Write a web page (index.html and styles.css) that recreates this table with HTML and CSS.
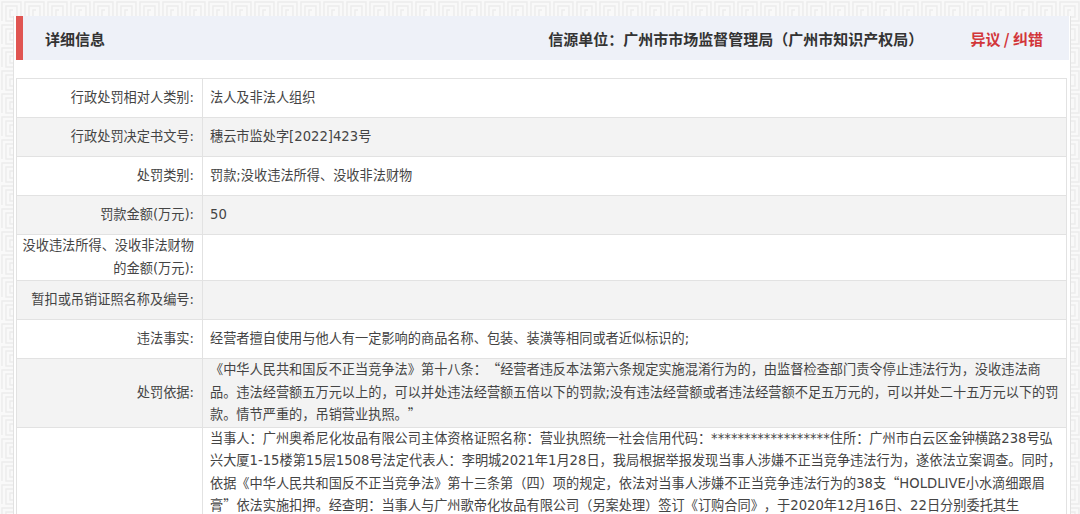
FILE: index.html
```html
<!DOCTYPE html>
<html lang="zh-CN">
<head>
<meta charset="utf-8">
<title>详细信息</title>
<link rel="stylesheet" href="styles.css">
</head>
<body>
<div class="panel">
  <div class="panel-head">
    <span class="accent"></span>
    <h2 class="title">详细信息</h2>
    <span class="source">信源单位：广州市市场监督管理局（广州市知识产权局）</span>
    <a class="report">异议 / 纠错</a>
  </div>
  <table class="info">
    <colgroup><col class="c-label"><col></colgroup>
    <tbody>
      <tr><th>行政处罚相对人类别:</th><td>法人及非法人组织</td></tr>
      <tr class="alt"><th>行政处罚决定书文号:</th><td>穗云市监处字[2022]423号</td></tr>
      <tr><th>处罚类别:</th><td>罚款;没收违法所得、没收非法财物</td></tr>
      <tr class="alt"><th>罚款金额(万元):</th><td>50</td></tr>
      <tr><th>没收违法所得、没收非法财物的金额(万元):</th><td></td></tr>
      <tr class="alt"><th>暂扣或吊销证照名称及编号:</th><td></td></tr>
      <tr><th>违法事实:</th><td>经营者擅自使用与他人有一定影响的商品名称、包装、装潢等相同或者近似标识的;</td></tr>
      <tr class="alt"><th>处罚依据:</th><td>《中华人民共和国反不正当竞争法》第十八条：<span class="cq">“</span>经营者违反本法第六条规定实施混淆行为的，由监督检查部门责令停止违法行为，没收违法商品。违法经营额五万元以上的，可以并处违法经营额五倍以下的罚款;没有违法经营额或者违法经营额不足五万元的，可以并处二十五万元以下的罚款。情节严重的，吊销营业执照。<span class="cq">”</span></td></tr>
      <tr><th></th><td>当事人：广州奥希尼化妆品有限公司主体资格证照名称：营业执照统一社会信用代码：******************住所：广州市白云区金钟横路238号弘兴大厦1-15楼第15层1508号法定代表人：李明城2021年1月28日，我局根据举报发现当事人涉嫌不正当竞争违法行为，遂依法立案调查。同时，依据《中华人民共和国反不正当竞争法》第十三条第（四）项的规定，依法对当事人涉嫌不正当竞争违法行为的38支<span class="cq">“</span>HOLDLIVE小水滴细跟眉膏<span class="cq">”</span>依法实施扣押。经查明：当事人与广州歌帝化妆品有限公司（另案处理）签订《订购合同》，于2020年12月16日、22日分别委托其生</td></tr>
    </tbody>
  </table>
</div>
</body>
</html>
```

FILE: styles.css
```css
html, body {
  margin: 0;
  height: 100%;
  overflow: hidden;
}
body {
  padding: 16px 9px 0 13px;
  box-sizing: border-box;
  font-family: "DejaVu Sans", "Noto Sans CJK SC", sans-serif;
  font-size: 13.2px;
  color: #444;
  text-spacing-trim: space-all;
  background-color: #f9f9f9;
  background-image: url("data:image/svg+xml,%3Csvg xmlns='http://www.w3.org/2000/svg' width='23' height='23'%3E%3Cpath d='M2 21V2h19v19H6V6h11v11H10V10h3' fill='none' stroke='%23ececec' stroke-width='1.4'/%3E%3C/svg%3E");
}
.cq {
  font-family: "Noto Sans CJK SC", sans-serif;
  line-height: 0;
}
.panel {
  background: #fff;
  border-left: 1px solid #e2e2e2;
  border-right: 1px solid #e2e2e2;
  padding: 0 1px 0 2px;
  min-height: 100%;
}
.panel-head {
  display: flex;
  align-items: center;
  height: 44px;
  background: #eef1f8;
  margin-bottom: 18px;
  font-family: "Noto Sans CJK SC", sans-serif;
}
.accent {
  width: 7px;
  align-self: stretch;
  background: #e05552;
}
.title {
  margin: 0 0 0 22px;
  font-size: 15px;
  font-weight: bold;
  color: #333;
  flex: 1;
}
.source {
  font-size: 15px;
  font-weight: bold;
  color: #333;
}
.report {
  margin: 0 26px 0 47px;
  font-size: 15px;
  font-weight: bold;
  color: #d2363a;
}
.info {
  width: 1051px;
  border-collapse: collapse;
  table-layout: fixed;
  border: 1px solid #e2e2e2;
}
.c-label {
  width: 186px;
}
.info th,
.info td {
  height: 38px;
  line-height: 22.5px;
  border: 1px solid #e2e2e2;
  vertical-align: middle;
  color: #444;
}
.info th {
  padding: 0 8px 0 4px;
  font-weight: normal;
  text-align: right;
}
.info td {
  padding: 0 3px 0 7px;
  text-align: left;
}
.info tr.alt th,
.info tr.alt td {
  background: #f3f3f3;
}
```
